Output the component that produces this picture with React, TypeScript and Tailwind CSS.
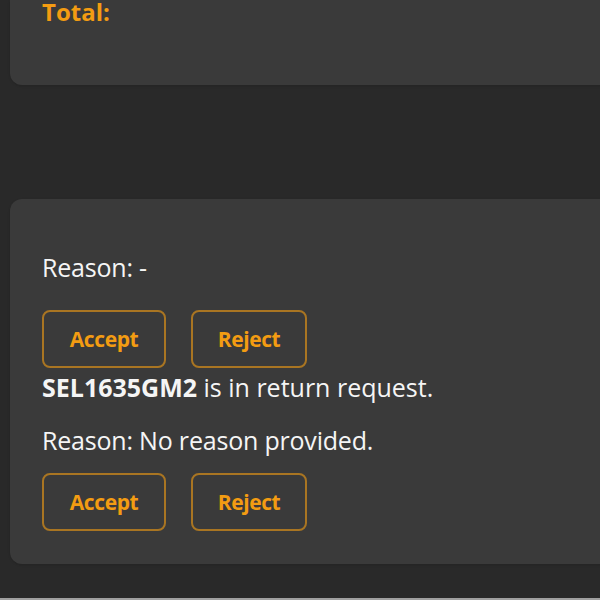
const requests = [
  { item: "", reason: "-" },
  { item: "SEL1635GM2", reason: "No reason provided." },
];

function ActionButtons() {
  return (
    <div className="flex flex-row gap-[25px]">
      <button className="w-[124px] h-[58px] rounded-lg border-2 border-[#a97522] text-[#f39c12] font-bold text-[21px] leading-[30px] tracking-[-0.4px]">
        Accept
      </button>
      <button className="w-[116px] h-[58px] rounded-lg border-2 border-[#a97522] text-[#f39c12] font-bold text-[21px] leading-[30px] tracking-[-0.4px]">
        Reject
      </button>
    </div>
  );
}

export default function App() {
  return (
    <div
      className="h-[600px] overflow-hidden bg-[#292929] px-[10px] border-b-2 border-[#a0a0a0] text-[25px] leading-[30px] text-[#f5f5f5]"
      style={{ fontFamily: '"Open Sans", "Noto Sans", sans-serif' }}
    >
      {/* order summary, scrolled off the top */}
      <div className="w-[660px] h-[85px] flex flex-col rounded-b-xl bg-[#3a3a3a] px-[32px] shadow-sm">
        <p className="-mt-[3px] font-bold text-[24px] text-[#f39c12]">Total:</p>
      </div>

      {/* return requests */}
      <div className="w-[660px] mt-[114px] rounded-xl bg-[#3a3a3a] px-[32px] pt-[53px] pb-[33px] shadow-sm">
        {requests.map((r, i) => (
          <div key={i} className={i === 0 ? "" : "mt-[4px]"}>
            {r.item && (
              <p>
                <span className="font-bold">{r.item}</span> is in return request.
              </p>
            )}
            <p className={r.item ? "mt-[23px] tracking-[-0.2px]" : "tracking-[-0.2px]"}>
              Reason: {r.reason}
            </p>
            <div className={r.item ? "mt-[18px]" : "mt-[28px]"}>
              <ActionButtons />
            </div>
          </div>
        ))}
      </div>
    </div>
  );
}
